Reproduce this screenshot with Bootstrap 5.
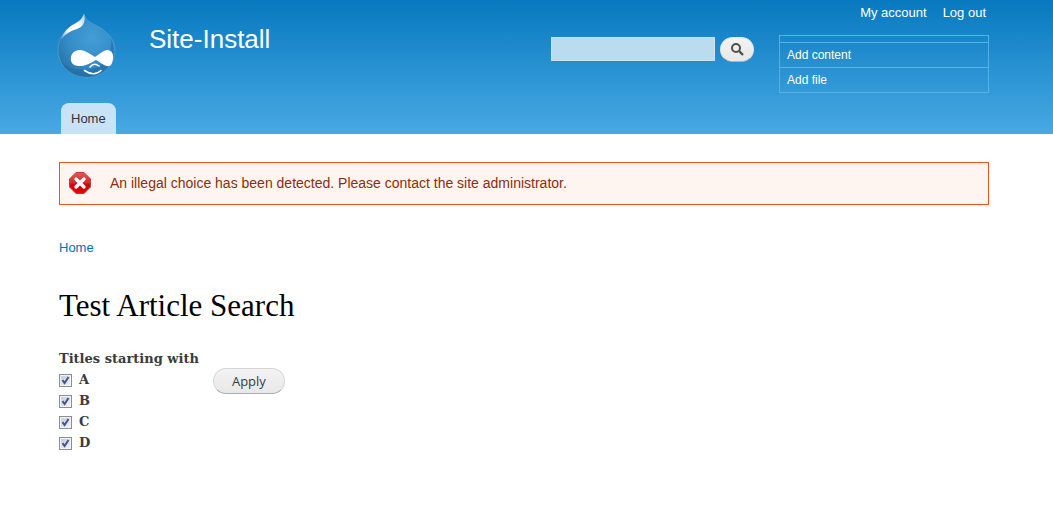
<!DOCTYPE html>
<html lang="en">
<head>
<meta charset="utf-8">
<meta name="viewport" content="width=device-width, initial-scale=1">
<title>Test Article Search | Site-Install</title>
<link href="https://cdn.jsdelivr.net/npm/bootstrap@5.3.0/dist/css/bootstrap.min.css" rel="stylesheet">
<style>
body { font-family: "Liberation Sans", Arial, sans-serif; font-size: 14px; line-height: 20px; color: #3b3b3b; }
a { text-decoration: none; }
.shell { padding-left: 59px; padding-right: 64px; }
.site-header { background: linear-gradient(#0779bf, #48a9e4); }
.header-row { height: 103px; }
.site-logo { margin-top: 13px; margin-left: -2px; }
.site-name { font-size: 26px; line-height: 30px; margin: 24px 0 0 33px; }
.search-form { margin-top: 37px; gap: 5px; }
.search-box { width: 164px; height: 24px; border: 1px solid #cbe3f3; border-radius: 0; background: #bbdbef; padding: 0 4px; font-size: 13px; }
.search-btn { width: 34px; height: 25px; border: 1px solid #e4e4e4; border-bottom-color: #b4b4b4; border-radius: 13px; background: linear-gradient(#f3f3f3, #e8e8e8); }
.user-side { width: 210px; margin-left: 25px; font-size: 12px; }
.user-links { font-size: 13px; line-height: 20px; padding: 3px 3px 0 0; gap: 16px; height: 35px; }
.admin-block { border: 1px solid #5bb0e3; padding-top: 6px; }
.admin-block a { display: block; border-top: 1px solid #5bb0e3; padding: 2px 7px; }
.main-tab { margin-left: 2px; height: 31px; line-height: 31px; padding: 0 10px; font-size: 13px; color: #333; background: #c8e3f6; border-radius: 8px 8px 0 0; }
.error-box { margin-top: 28px; padding: 9px 9px 8px; gap: 17px; border: 1px solid #ed541d; border-radius: 0; background: #fef5f1; color: #8c2e0b; line-height: 22px; }
.crumbs { margin-top: 33px; font-size: 13px; }
.crumbs a { color: #0071b3; }
.page-title { margin: 31px 0 0; font: 31px/34px Georgia, "Liberation Serif", serif; color: #000; }
.filter-form { margin-top: 25px; gap: 14px; }
.filter-form legend, .option { font-family: Georgia, "DejaVu Serif", serif; font-size: 13px; line-height: 21px; font-weight: bold; }
.filter-form legend { float: none; margin: 0; }
.option { gap: 7px; }
.tick { appearance: none; width: 13px; height: 13px; margin: 2px 0 0; border: 1px solid #8b8f94; background: #d3d8df; }
.tick:checked { background: url("data:image/svg+xml,%3Csvg xmlns='http://www.w3.org/2000/svg' viewBox='0 0 11 11'%3E%3Cpath d='M.5.5h10v10H.5z' fill='none' stroke='%23f4f4f4'/%3E%3Cpath d='M2.5 5.2 4.6 8 8.500 2' fill='none' stroke='%23415596' stroke-width='2'/%3E%3C/svg%3E") center / 11px, linear-gradient(135deg, #c3cad3, #f5f5f5); }
.apply-btn { width: 72px; height: 26px; margin-top: 20px; border: 1px solid #d6d6d6; border-bottom-color: #acacac; border-radius: 13px; background: linear-gradient(#f3f3f3, #e8e8e8); color: #3a3a3a; font: 13px/20px "Open Sans", sans-serif; }
</style>
<script src="https://cdn.jsdelivr.net/npm/bootstrap@5.3.0/dist/js/bootstrap.bundle.min.js"></script>
</head>
<body>
<header class="site-header shell">
  <div class="header-row d-flex align-items-start">
    <a class="site-logo" href="#" aria-label="Site-Install home">
      <svg class="d-block" width="59" height="65" viewBox="0 0 59 65" aria-hidden="true">
        <defs>
          <radialGradient id="drop" cx="60%" cy="38%" r="65%"><stop offset="0" stop-color="#459dd5"/><stop offset=".65" stop-color="#338cc8"/><stop offset="1" stop-color="#2b78ae"/></radialGradient>
          <linearGradient id="shine" x1="0" y1="1" x2="1" y2="0"><stop offset="0" stop-color="#fff" stop-opacity=".2"/><stop offset=".35" stop-color="#fff"/><stop offset=".6" stop-color="#fff"/><stop offset="1" stop-color="#a9d2ec"/></linearGradient>
        </defs>
        <path d="M27 1C28 6 32 9 40 13C51 19 58 26 58 38C58 53 45 64 30 64C14 64 1 53 1 37C1 27 6 19 14 13C21 9 25 7 27 1Z" fill="url(#drop)" stroke="#5b9cc8" stroke-opacity=".7"/>
        <path d="M54 26C56 42 46 56 29 57C17 57 9 54 4 48C9 59 19 64 30 64C48 64 63 46 54 26Z" fill="#1e659c" opacity=".5"/>
        <path d="M27 1C25 7 21 9 14 13C9 17 6 20 4 27C9 20 14 18 20 16C26 14 29 9 27 1Z" fill="url(#shine)"/>
        <path d="M23 37C28 37 33 41 38 44C43 41 46 37 51 37C57 38 57 45 55 50C52 57 46 51 39 47C32 51 28 53 22 53C16 53 13 49 14 44C15 39 19 37 23 37Z" fill="#fff"/>
        <path d="M33 54Q37 49 42 53M27.500 57.500Q37 64 44 57.500" fill="none" stroke="#fff" stroke-width="1.600" stroke-linecap="round"/>
      </svg>
    </a>
    <a class="site-name text-white" href="#">Site-Install</a>
    <form class="search-form d-flex ms-auto" role="search" onsubmit="return false">
      <input class="search-box" type="search" aria-label="Search">
      <button class="search-btn d-flex align-items-center justify-content-center p-0" type="submit" aria-label="Search">
        <svg width="13" height="13" viewBox="0 0 13 13" fill="none" stroke="#505050" stroke-width="2" aria-hidden="true"><circle cx="5" cy="5" r="4"/><path d="M8 8l4 4" stroke-width="2.4"/></svg>
      </button>
    </form>
    <div class="user-side">
      <nav class="user-links d-flex justify-content-end" aria-label="User"><a class="text-white" href="#">My account</a><a class="text-white" href="#">Log out</a></nav>
      <nav class="admin-block" aria-label="Shortcuts"><a class="text-white" href="#">Add content</a><a class="text-white" href="#">Add file</a></nav>
    </div>
  </div>
  <nav class="d-flex" aria-label="Main"><a class="main-tab" href="#">Home</a></nav>
</header>
<main class="shell">
  <div class="error-box alert d-flex align-items-start mb-0" role="alert">
    <svg width="24" height="24" viewBox="0 0 24 24" aria-hidden="true">
      <defs><linearGradient id="stop" x1="0" y1="0" x2="0" y2="1"><stop offset="0" stop-color="#e05a5c"/><stop offset=".5" stop-color="#d22a2d"/><stop offset=".55" stop-color="#c90a0d"/><stop offset="1" stop-color="#e00005"/></linearGradient></defs>
      <path d="M7 .5h8L21.500 7v8L15 21.500H7L.5 15V7z" fill="url(#stop)" stroke="#c9383a"/>
      <path d="M7 7l8 8M15 7l-8 8" stroke="#fff" stroke-width="3.400" stroke-linecap="round"/>
    </svg>
    <div>An illegal choice has been detected. Please contact the site administrator.</div>
  </div>
  <nav class="crumbs" aria-label="Breadcrumb"><a href="#">Home</a></nav>
  <h1 class="page-title">Test Article Search</h1>
  <form class="filter-form d-flex align-items-start" onsubmit="return false">
    <fieldset>
      <legend>Titles starting with</legend>
      <div class="option d-flex align-items-center"><input class="tick" type="checkbox" id="opt-a" checked><label for="opt-a">A</label></div>
      <div class="option d-flex align-items-center"><input class="tick" type="checkbox" id="opt-b" checked><label for="opt-b">B</label></div>
      <div class="option d-flex align-items-center"><input class="tick" type="checkbox" id="opt-c" checked><label for="opt-c">C</label></div>
      <div class="option d-flex align-items-center"><input class="tick" type="checkbox" id="opt-d" checked><label for="opt-d">D</label></div>
    </fieldset>
    <button class="apply-btn p-0" type="submit">Apply</button>
  </form>
</main>
</body>
</html>
